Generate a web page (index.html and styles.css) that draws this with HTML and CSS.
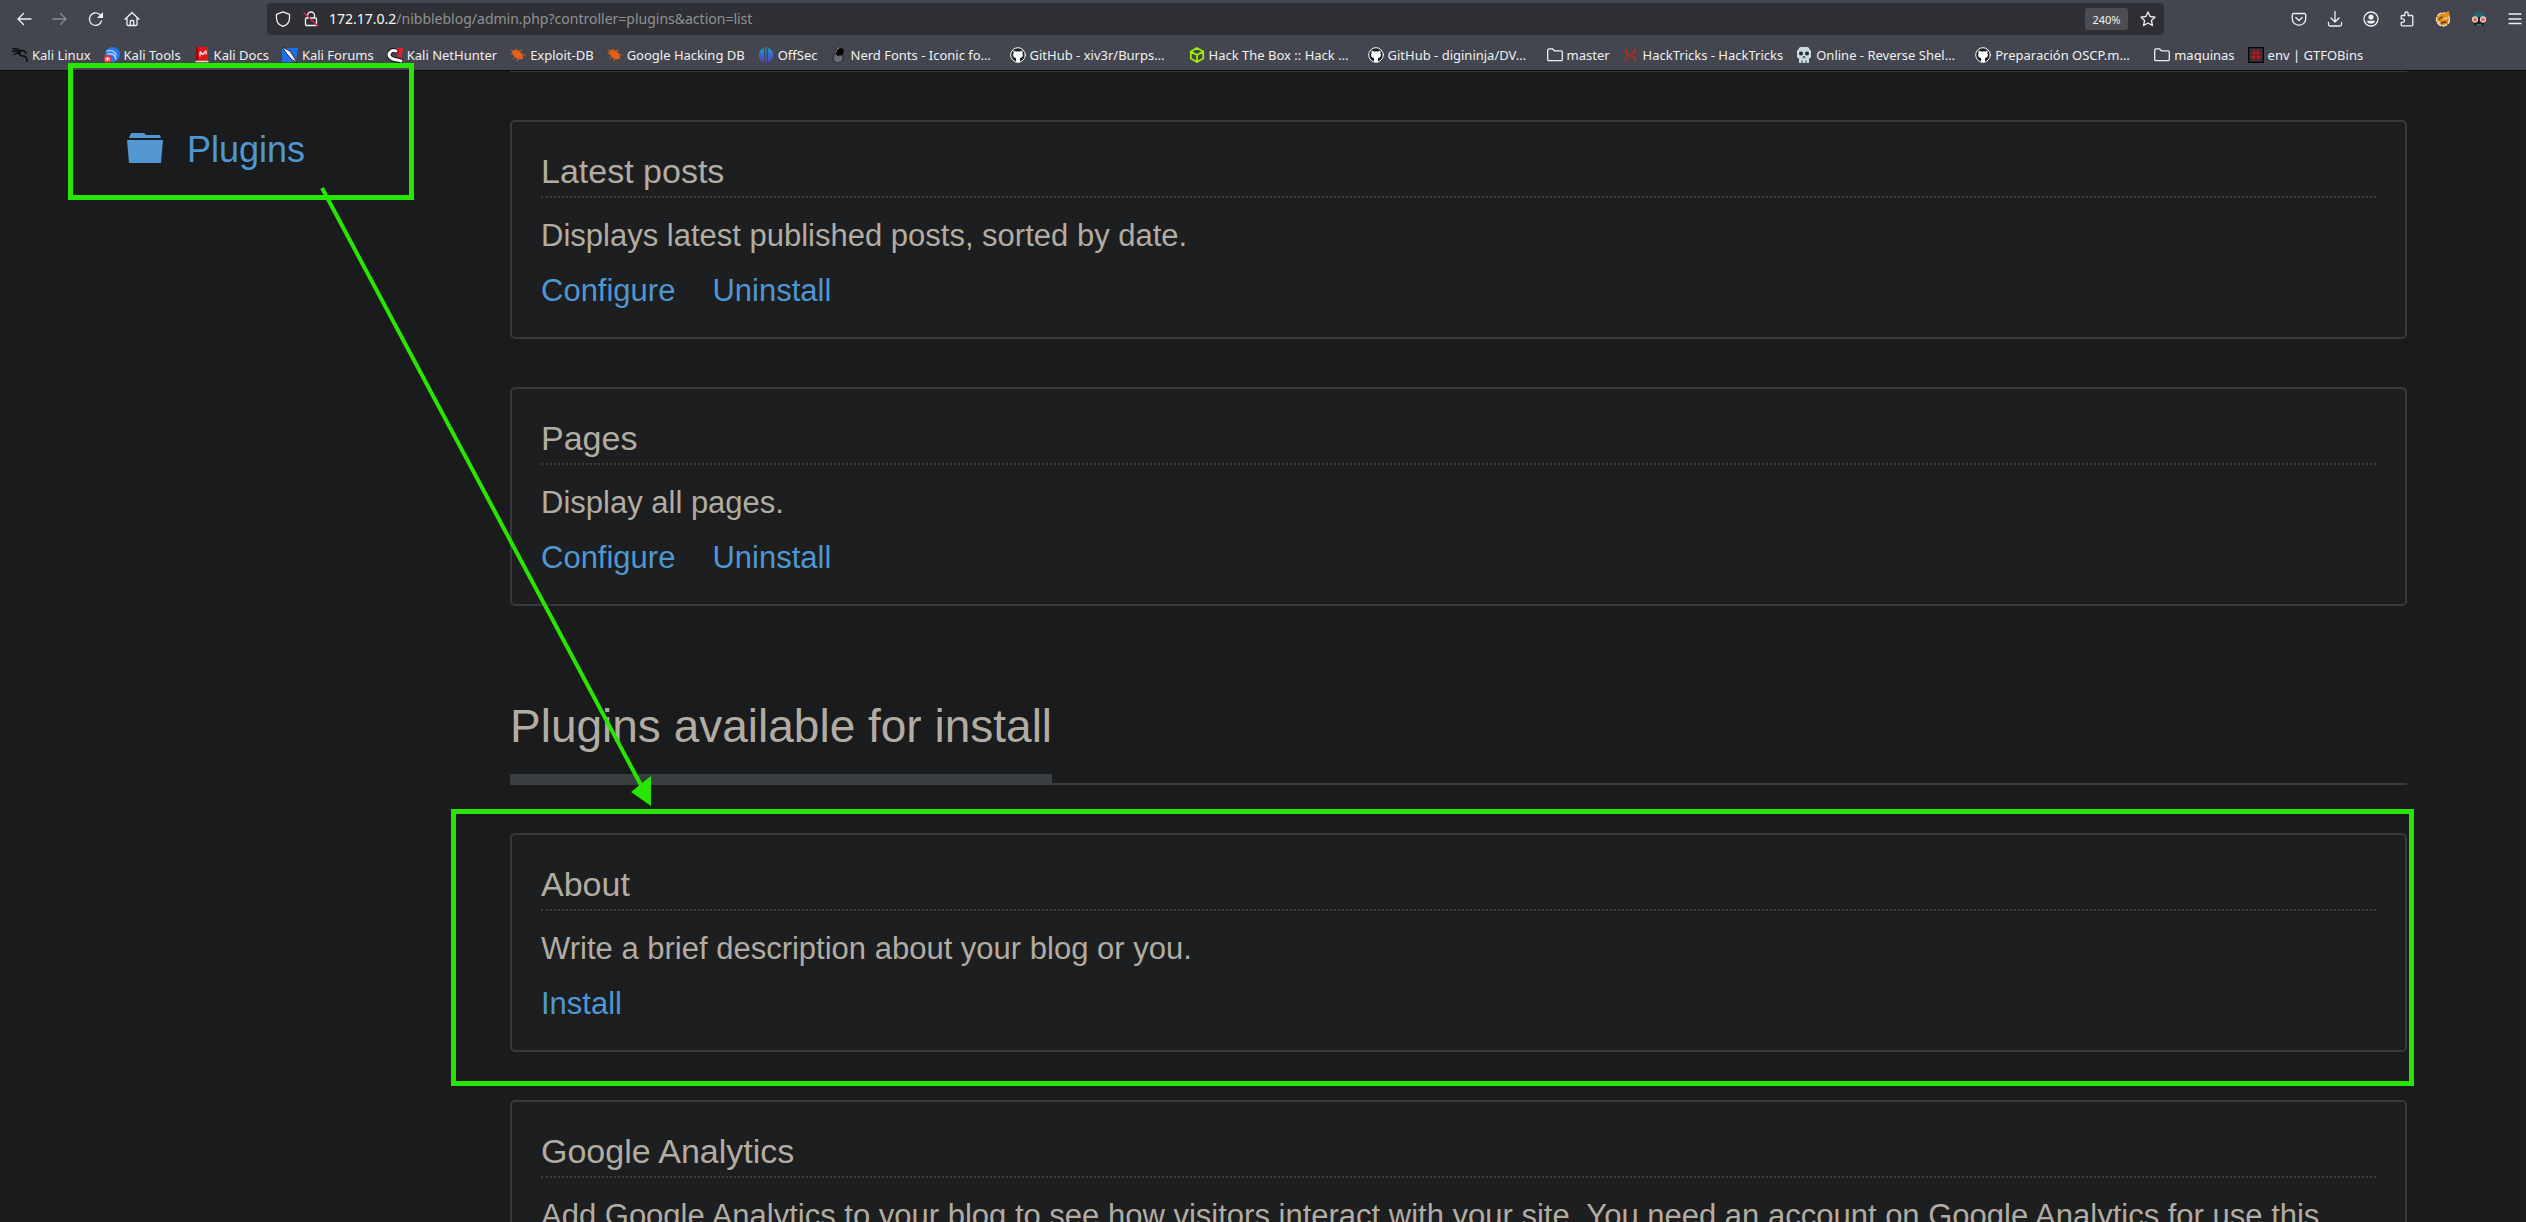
FILE: index.html
```html
<!DOCTYPE html>
<html lang="en">
<head>
<meta charset="utf-8">
<title>Nibbleblog - Plugins</title>
<link rel="stylesheet" href="styles.css">
</head>
<body>
<header class="browser">
  <div class="toolbar">
    <nav class="nav-buttons" aria-label="Navigation">
      <button class="tool" type="button" aria-label="Back"><svg viewBox="0 0 16 16"><path d="M15 8H2M7.500 2.500 2 8l5.500 5.500"/></svg></button>
      <button class="tool dim" type="button" aria-label="Forward"><svg viewBox="0 0 16 16"><path d="M1 8h13M8.500 2.500 14 8l-5.500 5.500"/></svg></button>
      <button class="tool" type="button" aria-label="Reload"><svg viewBox="0 0 16 16"><path d="M13.500 10A6.200 6.200 0 1 1 11.500 3.300L13 4.700"/><path class="solid" d="M15 1v6H9z"/></svg></button>
      <button class="tool" type="button" aria-label="Home"><svg viewBox="0 0 16 16"><path d="M1 8.200 8 1.500l7 6.700M3 7v6.500a1 1 0 0 0 1 1h8a1 1 0 0 0 1-1V7M6.300 14.500v-4a1 1 0 0 1 1-1h1.400a1 1 0 0 1 1 1v4"/></svg></button>
    </nav>
    <div class="urlbar">
      <svg class="icon" viewBox="0 0 16 16"><path d="M8 .8 14.500 3.300V7c0 4-2.500 7-6.500 8.400C4 14 1.500 11 1.500 7V3.300z"/></svg>
      <svg class="icon" viewBox="0 0 16 16"><path d="M4.500 7V4.500a3.500 3.500 0 0 1 7 0V7M3.500 7h9a1 1 0 0 1 1 1v5.500a1 1 0 0 1-1 1h-9a1 1 0 0 1-1-1V8a1 1 0 0 1 1-1z"/><path class="slash" d="m1 2 14 13"/></svg>
      <span class="url" role="textbox" aria-label="Address"><b class="host">172.17.0.2</b>/nibbleblog/admin.php?controller=plugins&amp;action=list</span>
      <button class="zoom" type="button">240%</button>
      <button class="star" type="button" aria-label="Bookmark this page"><svg viewBox="0 0 16 16"><path d="m8 .9 2.100 4.600 5 .6-3.700 3.400 1 5L8 12l-4.400 2.500 1-5L.9 6.100l5-.6z"/></svg></button>
    </div>
    <div class="extensions">
      <button class="tool" type="button" aria-label="Pocket"><svg viewBox="0 0 16 16"><path d="M2.500 2.500h11a1.200 1.200 0 0 1 1.200 1.200V8a6.700 6.200 0 0 1-13.400 0V3.700a1.200 1.200 0 0 1 1.200-1.200zM4.800 6.500 8 9.500l3.200-3"/></svg></button>
      <button class="tool" type="button" aria-label="Downloads"><svg viewBox="0 0 16 16"><path d="M8 .5v10.500M4 7l4 4 4-4M1.500 11.500v2a1.500 1.500 0 0 0 1.500 1.500h10a1.500 1.500 0 0 0 1.500-1.500v-2"/></svg></button>
      <button class="tool" type="button" aria-label="Account"><svg viewBox="0 0 16 16"><circle cx="8" cy="8" r="7"/><circle class="solid" cx="8" cy="6" r="2.600"/><path class="solid" d="M3.800 9.800h8.400c-.4 2-2 3-4.200 3s-3.800-1-4.200-3z"/></svg></button>
      <button class="tool" type="button" aria-label="Extensions"><svg viewBox="0 0 16 16"><path d="M5.800 4.500V2.700a1.700 1.700 0 0 1 3.400 0v1.800h3.600a1 1 0 0 1 1 1v8.300a1 1 0 0 1-1 1H3.200a1 1 0 0 1-1-1v-2.500h1.600a1.700 1.700 0 0 0 0-3.400H2.200V5.500a1 1 0 0 1 1-1z"/></svg></button>
      <button class="tool" type="button" aria-label="FoxyProxy"><svg viewBox="0 0 16 16"><circle cx="8" cy="8.500" r="6.500" fill="#e48a13" stroke="#f2e5d0" stroke-dasharray="4 2"/><path fill="#e48a13" stroke="none" d="m9 2 5-2 1 6z"/><path d="m4 8 3-2M6 12l5-1" stroke="#573216"/><path d="m9 8 3-1M3 11l2 1"/></svg></button>
      <button class="tool" type="button" aria-label="User agent"><svg viewBox="0 0 16 16"><path d="M2 7a6 6.500 0 0 1 12 0z" fill="#246575" stroke="none"/><path d="M2 6h12v5l-2 4H4l-2-4z" fill="#172028" stroke="none"/><circle cx="4" cy="8.500" r="2.500" fill="#ef654d" stroke="#e6c8bd"/><circle cx="12" cy="8.500" r="2.500" fill="#ef654d" stroke="#e6c8bd"/><path d="M6 14h4" stroke="#6a747a"/></svg></button>
      <button class="tool" type="button" aria-label="Menu"><svg viewBox="0 0 16 16"><path d="M2 3h12M2 8h12M2 12.500h12"/></svg></button>
    </div>
  </div>
  <nav class="bookmarks" aria-label="Bookmarks">
    <a href="#"><svg viewBox="0 0 16 16"><path d="M1 1.500c4 0 6 1 7.500 3M0 4.500c3-1 6-.5 8 1M2 7.500c2-1.500 4-1.500 6-1.500M7 5c0 3 1 4 4 4s4 2 4 5.500M8 4c3-1 5 0 6 2.500" stroke="#0b0b0c" stroke-width="1.500"/></svg><span>Kali Linux</span></a>
    <a href="#"><svg viewBox="0 0 16 16"><circle cx="8.500" cy="7.500" r="7.500" fill="#2777f0" stroke="none"/><path d="M3 4c5-1 8 0 9 4M4 7c4-1 7 1 8 5" stroke="#b4d4ff"/><rect y="8" width="7" height="8" rx="3" fill="#e3323a" stroke="none"/><path d="M2 13.500V11h3v2.500M3.500 11v2.500" stroke-width="1"/></svg><span>Kali Tools</span></a>
    <a href="#"><svg viewBox="0 0 16 16"><path d="M2 0h12v14H2z" fill="#dc1717" stroke="none"/><path d="M2 0h2v14H2z" fill="#8b0909" stroke="none"/><path d="M2 14.500h12" stroke="#ddd"/><path d="M12 5c-2-2-2 4-4 2s-1-3-2-1M6 6v3M12 4v3"/></svg><span>Kali Docs</span></a>
    <a href="#"><svg viewBox="0 0 16 16"><path d="M0 1h16l-2 14H0z" fill="#1c70e9" stroke="none"/><path d="m0 0 8 4 4 6 3 6-6-4-4-5z" fill="#f4f4f4" stroke="#222" stroke-width="1"/></svg><span>Kali Forums</span></a>
    <a href="#"><svg viewBox="0 0 16 16"><path d="M5 1h11l-2 13z" fill="#df1f2d" stroke="none"/><path d="M9 4C3 2 0 8 4 11s7 1 10 3" stroke="#111" stroke-width="5"/><path d="M9 4C3 2 0 8 4 11s7 1 10 3" stroke="#fff" stroke-width="3"/></svg><span>Kali NetHunter</span></a>
    <a href="#"><svg viewBox="0 0 16 16"><path d="M3 4c3-2 6-1 8 2s3 5 1 6-6 0-8-3-3-4-1-5z" fill="#e85f16" stroke="none"/><path d="m1 6 3 2M6 2l1 3M9 4l3-1M11 7l4 1M5 9l-2 3M8 11l-1 3M1 3l3 1" stroke="#c9602b" stroke-width="1"/></svg><span>Exploit-DB</span></a>
    <a href="#"><svg viewBox="0 0 16 16"><path d="M3 4c3-2 6-1 8 2s3 5 1 6-6 0-8-3-3-4-1-5z" fill="#e85f16" stroke="none"/><path d="m1 6 3 2M6 2l1 3M9 4l3-1M11 7l4 1M5 9l-2 3M8 11l-1 3M1 3l3 1" stroke="#c9602b" stroke-width="1"/></svg><span>Google Hacking DB</span></a>
    <a href="#"><svg viewBox="0 0 16 16"><defs><linearGradient id="off" x2="0" y2="1"><stop stop-color="#1a9bbd"/><stop offset="1" stop-color="#5a3bd0"/></linearGradient></defs><path d="M6 1v14C-1 13-1 3 6 1zM7.300 0h1.400v16H7.300zM10 1v14c7-2 7-12 0-14z" fill="url(#off)" stroke="none"/></svg><span>OffSec</span></a>
    <a class="clipped" href="#"><svg viewBox="0 0 16 16"><circle cx="7" cy="11" r="5" fill="#686b70" stroke="#303236" stroke-dasharray="2 1"/><path d="M4 3c2-3 7-3 9 0l-1 5-6 1z" fill="#080808" stroke="none"/><path d="M5 5c0-2 1-4 3-4" stroke="#aaa" stroke-width="1"/></svg><span>Nerd Fonts - Iconic fo…</span></a>
    <a class="clipped" href="#"><svg viewBox="0 0 16 16"><circle cx="8" cy="8" r="7.300" fill="#1f2329" stroke="#fff" stroke-width="1"/><path d="M3.500 3.500 6 4.500h4l2.500-1v3c1 3-.5 4-2.500 4.500V15H6v-4C4 10.500 2.500 9.500 3.500 6.500z" fill="#fff" stroke="none"/></svg><span>GitHub - xiv3r/Burps…</span></a>
    <a class="clipped" href="#"><svg viewBox="0 0 16 16"><path d="m8 1 6.200 3.500v7L8 15l-6.200-3.500v-7zM1.800 4.500 8 8l6.200-3.500M8 8v7" stroke="#9fef00" stroke-width="1.800"/></svg><span>Hack The Box :: Hack …</span></a>
    <a class="clipped" href="#"><svg viewBox="0 0 16 16"><circle cx="8" cy="8" r="7.300" fill="#1f2329" stroke="#fff" stroke-width="1"/><path d="M3.500 3.500 6 4.500h4l2.500-1v3c1 3-.5 4-2.500 4.500V15H6v-4C4 10.500 2.500 9.500 3.500 6.500z" fill="#fff" stroke="none"/></svg><span>GitHub - digininja/DV…</span></a>
    <a href="#"><svg viewBox="0 0 16 16"><path d="M.7 12.500V3a1.200 1.200 0 0 1 1.200-1.200h3.500l2 2h6.700A1.200 1.200 0 0 1 15.300 5v7.500a1.200 1.200 0 0 1-1.200 1.200H1.900a1.200 1.200 0 0 1-1.200-1.200z"/></svg><span>master</span></a>
    <a href="#"><svg viewBox="0 0 16 16"><path d="M3 2v3l2 3M3 14v-3M5 9.500l5-3M12 2v2L10 6.500M10 9.500l2 2V14" stroke="#dd2114" stroke-width="1.400"/></svg><span>HackTricks - HackTricks</span></a>
    <a class="clipped" href="#"><svg viewBox="0 0 16 16"><path d="M4 0h8l3 4v6l-2 2v4H3v-4l-2-2V4z" fill="#cad7de" stroke="none"/><circle cx="5" cy="6.500" r="2" fill="#252c31" stroke="none"/><circle cx="11" cy="6.500" r="2" fill="#252c31" stroke="none"/><path d="m7 11 1-2 1 2M6 14v2M10 14v2" stroke="#394248" stroke-width="1"/></svg><span>Online - Reverse Shel…</span></a>
    <a class="clipped" href="#"><svg viewBox="0 0 16 16"><circle cx="8" cy="8" r="7.300" fill="#1f2329" stroke="#fff" stroke-width="1"/><path d="M3.500 3.500 6 4.500h4l2.500-1v3c1 3-.5 4-2.500 4.500V15H6v-4C4 10.500 2.500 9.500 3.500 6.500z" fill="#fff" stroke="none"/></svg><span>Preparación OSCP.m…</span></a>
    <a href="#"><svg viewBox="0 0 16 16"><path d="M.7 12.500V3a1.200 1.200 0 0 1 1.200-1.200h3.500l2 2h6.700A1.200 1.200 0 0 1 15.300 5v7.500a1.200 1.200 0 0 1-1.200 1.200H1.900a1.200 1.200 0 0 1-1.200-1.200z"/></svg><span>maquinas</span></a>
    <a href="#"><svg viewBox="0 0 16 16"><path d="M.5.500h15v15H.5z" fill="#303238" stroke="#050505"/><path d="M6 3v10M10 3v10M3.500 6h9M3.500 10h9" stroke="#c01418" stroke-width="1.600"/></svg><span>env | GTFOBins</span></a>
  </nav>
</header>

<div class="page">
  <aside class="sidebar">
    <a class="side-link" href="#"><svg viewBox="0 0 36 30"><path d="M4 0h13l2 2h14l1 3H2zM0 7h36l-2 23H2z"/></svg>Plugins</a>
  </aside>
  <main class="content">
    <section class="card tail"></section>
    <section class="card">
      <h3>Latest posts</h3>
      <p>Displays latest published posts, sorted by date.</p>
      <div class="actions"><a href="#">Configure</a><a href="#">Uninstall</a></div>
    </section>
    <section class="card">
      <h3>Pages</h3>
      <p>Display all pages.</p>
      <div class="actions"><a href="#">Configure</a><a href="#">Uninstall</a></div>
    </section>
    <h2><span>Plugins available for install</span></h2>
    <section class="card marked">
      <h3>About</h3>
      <p>Write a brief description about your blog or you.</p>
      <div class="actions"><a href="#">Install</a></div>
    </section>
    <section class="card">
      <h3>Google Analytics</h3>
      <p>Add Google Analytics to your blog to see how visitors interact with your site. You need an account on Google Analytics for use this</p>
    </section>
  </main>
</div>

<div class="mark-menu"></div>
<svg class="arrow" viewBox="0 0 340 630"><path class="shaft" d="M4 4 324 603"/><path class="head" d="m333 622-20-14 20-16z"/></svg>
</body>
</html>
```
FILE: styles.css
```css
* { box-sizing: border-box; }

body {
  margin: 0;
  height: 100vh;
  overflow: hidden;
  position: relative;
  display: flex;
  flex-direction: column;
  background: #1a1b1d;
  color: #b2aca2;
  font-family: "Liberation Sans", Arial, sans-serif;
}

a { color: #4f97d1; text-decoration: none; }
button { border: 0; padding: 0; background: none; color: inherit; font: inherit; }

/* Browser chrome */
.browser {
  flex: none;
  background: #43464e;
  border-bottom: 1px solid #0c0c0e;
  color: #f0f0f1;
  font-family: "Noto Sans", sans-serif;
}
.browser svg {
  display: block;
  width: 16px;
  height: 16px;
  flex: none;
  fill: none;
  stroke: #f0f0f1;
  stroke-width: 1.3;
  stroke-linecap: round;
  stroke-linejoin: round;
}
.browser svg .solid { fill: #f0f0f1; stroke: none; }
.browser svg .slash { stroke: #e22850; }

.toolbar {
  display: flex;
  align-items: center;
  height: 35px;
  padding-top: 3px;
}
.nav-buttons { display: flex; width: 267px; padding-left: 6px; }
.tool { display: grid; place-items: center; width: 36px; height: 32px; }
.dim { opacity: 0.4; }
.urlbar {
  flex: 1;
  display: flex;
  align-items: center;
  height: 32px;
  padding: 0 8px;
  border-radius: 4px;
  background: #2f3035;
}
.icon { margin-right: 12px; }
.url {
  flex: 1;
  margin-left: -2px;
  color: #8f9094;
  font-size: 14px;
  line-height: 18px;
}
.host { color: #f6f6f7; font-weight: 400; }
.zoom {
  width: 43px;
  height: 22px;
  margin-right: 12px;
  border-radius: 3px;
  background: #4c4d52;
  font-size: 11px;
}
.extensions { display: flex; margin-left: 117px; margin-right: -7px; }

.bookmarks {
  display: flex;
  align-items: center;
  gap: 13px;
  height: 35px;
  padding: 5px 12px 0;
}
.bookmarks a {
  flex: none;
  display: flex;
  align-items: center;
  gap: 4px;
  color: #f0f0f1;
  font-size: 13px;
  line-height: 20px;
  white-space: nowrap;
}
.bookmarks .clipped { width: 166px; }

/* Admin page */
.page { flex: 1; min-height: 0; display: flex; overflow: hidden; }
.sidebar { flex: none; width: 510px; padding: 58px 0 0 127px; }
.side-link {
  display: flex;
  align-items: center;
  gap: 24px;
  font-size: 36px;
  line-height: 42px;
}
.side-link svg { width: 36px; height: 30px; margin-bottom: 4px; fill: #5297d2; }

.content { flex: 1; min-width: 0; margin-right: 119px; }
.card {
  margin-bottom: 48px;
  padding: 30px 29px 28px;
  border: 2px solid #38393b;
  border-radius: 5px;
  background: #1d1e20;
}
.card.tail {
  height: 1px;
  padding: 0;
  border-width: 0 0 1px;
  border-radius: 0;
}
.card h3 {
  margin: 0 0 20px;
  padding-bottom: 6px;
  border-bottom: 2px dotted #3d3e41;
  font-size: 34px;
  font-weight: 400;
  line-height: 38px;
}
.card p { margin: 0 0 19px; font-size: 31px; line-height: 36px; }
.actions { display: flex; gap: 37px; font-size: 31px; line-height: 36px; }

.content h2 {
  margin: 94px 0 48px;
  border-bottom: 2px solid #3b3c3f;
  font-size: 46px;
  font-weight: 400;
  line-height: 52px;
}
.content h2 span {
  display: block;
  width: fit-content;
  margin-bottom: -2px;
  padding-bottom: 22px;
  border-bottom: 11px solid #3b3e41;
}

/* Annotations drawn over the page */
.marked { position: relative; }
.marked::after {
  content: "";
  position: absolute;
  inset: -26px -9px -36px -61px;
  border: 5px solid #28e600;
}
.mark-menu {
  position: absolute;
  left: 68px;
  top: 63px;
  width: 346px;
  height: 137px;
  border: 5px solid #28e600;
}
.arrow { position: absolute; left: 318px; top: 184px; width: 340px; height: 630px; }
.shaft { fill: none; stroke: #28e600; stroke-width: 4; }
.head { fill: #28e600; }
```
